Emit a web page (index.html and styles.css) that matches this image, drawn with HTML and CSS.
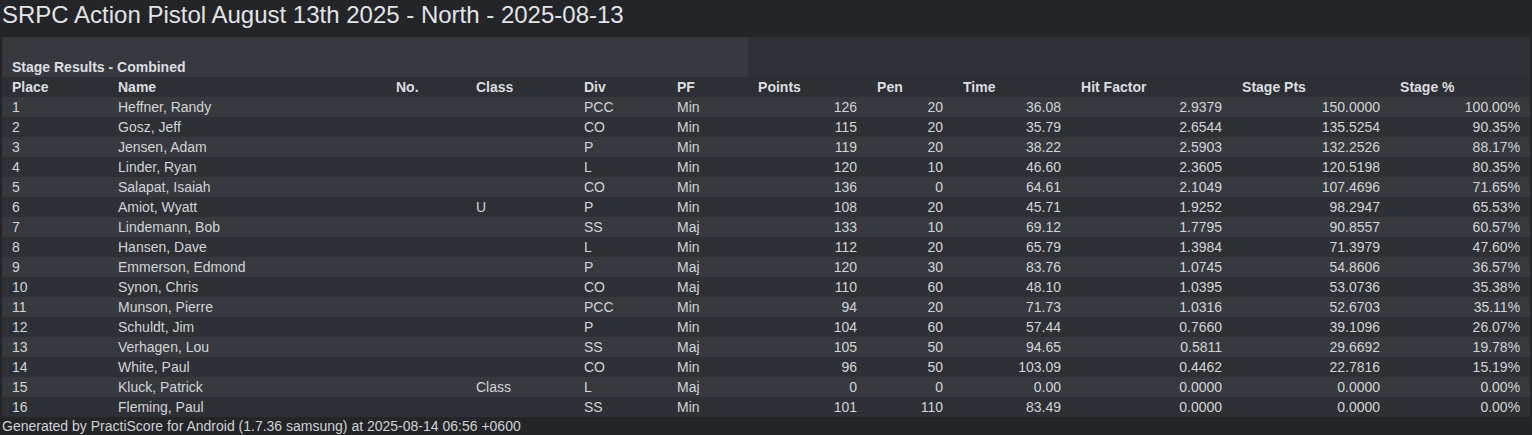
FILE: index.html
```html
<!DOCTYPE html>
<html>
<head>
<meta charset="utf-8">
<title>SRPC Action Pistol August 13th 2025 - North - 2025-08-13</title>
<link rel="stylesheet" href="styles.css">
</head>
<body>
<h1 class="title">SRPC Action Pistol August 13th 2025 - North - 2025-08-13</h1>
<table class="results">
  <colgroup>
    <col class="c-place"><col class="c-name"><col class="c-no"><col class="c-class"><col class="c-div"><col class="c-pf">
    <col class="c-points"><col class="c-pen"><col class="c-time"><col class="c-hf"><col class="c-spts"><col class="c-spct">
  </colgroup>
  <thead>
    <tr class="cap-row"><th class="caption" colspan="6">Stage Results - Combined</th><th class="cap-rest" colspan="6"></th></tr>
    <tr class="head-row">
      <th>Place</th><th>Name</th><th>No.</th><th>Class</th><th>Div</th><th>PF</th>
      <th>Points</th><th>Pen</th><th>Time</th><th>Hit Factor</th><th>Stage Pts</th><th>Stage %</th>
    </tr>
  </thead>
  <tbody>
    <tr><td>1</td><td>Heffner, Randy</td><td></td><td></td><td>PCC</td><td>Min</td><td class="num">126</td><td class="num">20</td><td class="num">36.08</td><td class="num">2.9379</td><td class="num">150.0000</td><td class="num">100.00%</td></tr>
    <tr><td>2</td><td>Gosz, Jeff</td><td></td><td></td><td>CO</td><td>Min</td><td class="num">115</td><td class="num">20</td><td class="num">35.79</td><td class="num">2.6544</td><td class="num">135.5254</td><td class="num">90.35%</td></tr>
    <tr><td>3</td><td>Jensen, Adam</td><td></td><td></td><td>P</td><td>Min</td><td class="num">119</td><td class="num">20</td><td class="num">38.22</td><td class="num">2.5903</td><td class="num">132.2526</td><td class="num">88.17%</td></tr>
    <tr><td>4</td><td>Linder, Ryan</td><td></td><td></td><td>L</td><td>Min</td><td class="num">120</td><td class="num">10</td><td class="num">46.60</td><td class="num">2.3605</td><td class="num">120.5198</td><td class="num">80.35%</td></tr>
    <tr><td>5</td><td>Salapat, Isaiah</td><td></td><td></td><td>CO</td><td>Min</td><td class="num">136</td><td class="num">0</td><td class="num">64.61</td><td class="num">2.1049</td><td class="num">107.4696</td><td class="num">71.65%</td></tr>
    <tr><td>6</td><td>Amiot, Wyatt</td><td></td><td>U</td><td>P</td><td>Min</td><td class="num">108</td><td class="num">20</td><td class="num">45.71</td><td class="num">1.9252</td><td class="num">98.2947</td><td class="num">65.53%</td></tr>
    <tr><td>7</td><td>Lindemann, Bob</td><td></td><td></td><td>SS</td><td>Maj</td><td class="num">133</td><td class="num">10</td><td class="num">69.12</td><td class="num">1.7795</td><td class="num">90.8557</td><td class="num">60.57%</td></tr>
    <tr><td>8</td><td>Hansen, Dave</td><td></td><td></td><td>L</td><td>Min</td><td class="num">112</td><td class="num">20</td><td class="num">65.79</td><td class="num">1.3984</td><td class="num">71.3979</td><td class="num">47.60%</td></tr>
    <tr><td>9</td><td>Emmerson, Edmond</td><td></td><td></td><td>P</td><td>Maj</td><td class="num">120</td><td class="num">30</td><td class="num">83.76</td><td class="num">1.0745</td><td class="num">54.8606</td><td class="num">36.57%</td></tr>
    <tr><td>10</td><td>Synon, Chris</td><td></td><td></td><td>CO</td><td>Maj</td><td class="num">110</td><td class="num">60</td><td class="num">48.10</td><td class="num">1.0395</td><td class="num">53.0736</td><td class="num">35.38%</td></tr>
    <tr><td>11</td><td>Munson, Pierre</td><td></td><td></td><td>PCC</td><td>Min</td><td class="num">94</td><td class="num">20</td><td class="num">71.73</td><td class="num">1.0316</td><td class="num">52.6703</td><td class="num">35.11%</td></tr>
    <tr><td>12</td><td>Schuldt, Jim</td><td></td><td></td><td>P</td><td>Min</td><td class="num">104</td><td class="num">60</td><td class="num">57.44</td><td class="num">0.7660</td><td class="num">39.1096</td><td class="num">26.07%</td></tr>
    <tr><td>13</td><td>Verhagen, Lou</td><td></td><td></td><td>SS</td><td>Maj</td><td class="num">105</td><td class="num">50</td><td class="num">94.65</td><td class="num">0.5811</td><td class="num">29.6692</td><td class="num">19.78%</td></tr>
    <tr><td>14</td><td>White, Paul</td><td></td><td></td><td>CO</td><td>Min</td><td class="num">96</td><td class="num">50</td><td class="num">103.09</td><td class="num">0.4462</td><td class="num">22.7816</td><td class="num">15.19%</td></tr>
    <tr><td>15</td><td>Kluck, Patrick</td><td></td><td>Class</td><td>L</td><td>Maj</td><td class="num">0</td><td class="num">0</td><td class="num">0.00</td><td class="num">0.0000</td><td class="num">0.0000</td><td class="num">0.00%</td></tr>
    <tr><td>16</td><td>Fleming, Paul</td><td></td><td></td><td>SS</td><td>Min</td><td class="num">101</td><td class="num">110</td><td class="num">83.49</td><td class="num">0.0000</td><td class="num">0.0000</td><td class="num">0.00%</td></tr>
  </tbody>
</table>
<p class="footer">Generated by PractiScore for Android (1.7.36 samsung) at 2025-08-14 06:56 +0600</p>
</body>
</html>
```

FILE: styles.css
```css
html, body {
  margin: 0;
  padding: 0;
}
body {
  background: #232529;
  color: #d2d4d6;
  font-family: "Liberation Sans", Arial, sans-serif;
  font-size: 14px;
  padding: 0 2px;
}
.title {
  margin: 0;
  height: 37px;
  font-size: 24px;
  font-weight: normal;
  line-height: 29px;
  color: #e2e4e6;
}
.results {
  width: 1528px;
  table-layout: fixed;
  border-collapse: collapse;
  background: #2e3135;
}
.c-place { width: 106px; }
.c-name { width: 278px; }
.c-no { width: 80px; }
.c-class { width: 108px; }
.c-div { width: 93px; }
.c-pf { width: 81px; }
.c-points { width: 119px; }
.c-pen { width: 86px; }
.c-time { width: 118px; }
.c-hf { width: 161px; }
.c-spts { width: 158px; }
.c-spct { width: 140px; }

.results th, .results td {
  padding: 0 10px;
  height: 20px;
  line-height: 20px;
  white-space: nowrap;
  text-align: left;
}
.results th {
  font-weight: bold;
  color: #dcdee0;
}
.cap-row th {
  height: 40px;
  vertical-align: bottom;
  line-height: 20px;
}
.caption {
  background: #363a3f;
}
.head-row th {
  background: #2c2f33;
}
.results tbody tr:nth-child(odd) {
  background: #363a3f;
}
.results tbody tr:nth-child(even) {
  background: #2d3034;
}
.results td.num {
  text-align: right;
}
.footer {
  margin: 0;
  line-height: 19px;
  height: 18px;
  color: #d0d2d4;
}
```
